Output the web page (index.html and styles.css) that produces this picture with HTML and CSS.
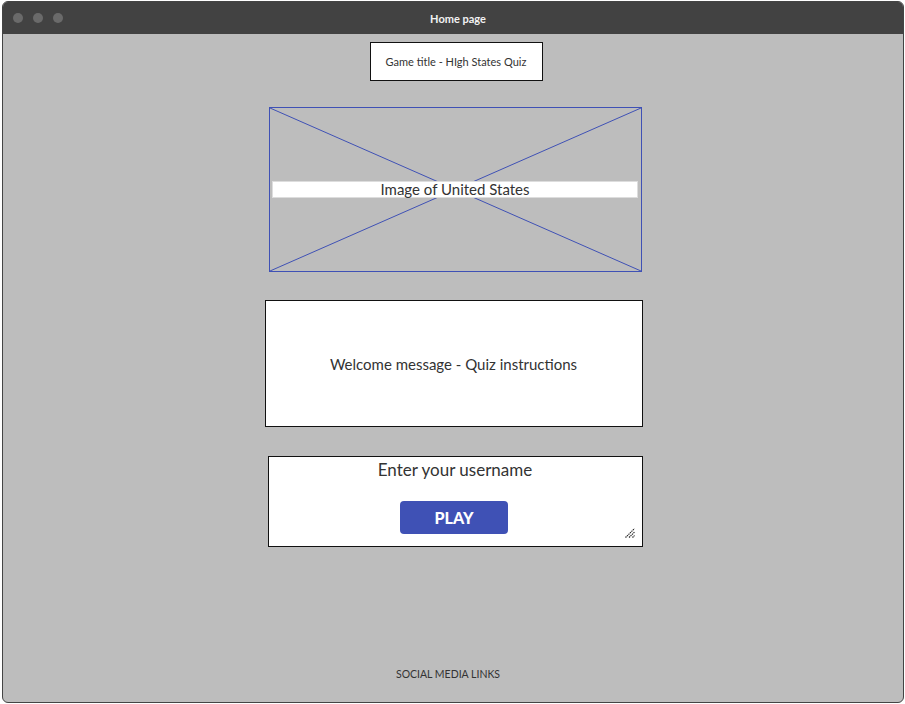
FILE: index.html
```html
<!DOCTYPE html>
<html>
<head>
<meta charset="utf-8">
<title>Home page</title>
<link rel="stylesheet" href="styles.css">
</head>
<body>
<div class="window">
  <div class="titlebar">
    <div class="dots"><span class="dot"></span><span class="dot"></span><span class="dot"></span></div>
    <div class="wtitle">Home page</div>
  </div>
  <div class="content">
    <div class="game-title">Game title - HIgh States Quiz</div>
    <div class="image-ph">
      <svg class="cross" viewBox="0 0 100 100" preserveAspectRatio="none">
        <line x1="0" y1="0" x2="100" y2="100" vector-effect="non-scaling-stroke"/>
        <line x1="100" y1="0" x2="0" y2="100" vector-effect="non-scaling-stroke"/>
      </svg>
      <div class="img-label">Image of United States</div>
    </div>
    <div class="welcome">Welcome message - Quiz instructions</div>
    <div class="username">
      <div class="user-label">Enter your username</div>
      <button class="play">PLAY</button>
      <svg class="grip" width="12" height="12" viewBox="0 0 12 12">
        <path d="M1.5 10.5 L10.5 1.5 M5 10.5 L10.5 5 M8.5 10.5 L10.5 8.5" stroke="#222" stroke-width="1.1" stroke-dasharray="1.4 0.7" fill="none"/>
      </svg>
    </div>
    <div class="spacer"></div>
    <div class="social">SOCIAL MEDIA LINKS</div>
  </div>
</div>
</body>
</html>
```

FILE: styles.css
```css
html, body {
  margin: 0;
  padding: 0;
  background: #ffffff;
}
body {
  font-family: "Lato", "Open Sans", sans-serif;
  color: #333;
}
.window {
  box-sizing: border-box;
  margin: 1px 0 0 2px;
  width: 902px;
  height: 702px;
  border: 1px solid #444;
  border-radius: 6px;
  background: #bdbdbd;
  overflow: hidden;
  display: flex;
  flex-direction: column;
}
.titlebar {
  height: 32px;
  background: #424242;
  display: flex;
  align-items: center;
  position: relative;
  flex: none;
}
.dots {
  display: flex;
  gap: 10px;
  padding-left: 10px;
}
.dot {
  width: 10px;
  height: 10px;
  border-radius: 50%;
  background: #6a6a6a;
}
.wtitle {
  position: absolute;
  left: 10px;
  right: 0;
  text-align: center;
  color: #f2f2f2;
  font-weight: 700;
  font-size: 11px;
}
.content {
  flex: 1;
  display: flex;
  flex-direction: column;
  align-items: center;
}
.game-title {
  box-sizing: border-box;
  margin-top: 8px;
  margin-left: 6px;
  width: 173px;
  height: 39px;
  border: 1px solid #111;
  background: #fff;
  display: flex;
  align-items: center;
  justify-content: center;
  font-size: 11px;
  color: #333;
}
.image-ph {
  box-sizing: border-box;
  position: relative;
  margin-top: 26px;
  margin-left: 4px;
  width: 373px;
  height: 165px;
  border: 1px solid #3f51b5;
  display: flex;
  align-items: center;
  justify-content: center;
}
.cross {
  position: absolute;
  inset: 0;
  width: 100%;
  height: 100%;
}
.cross line {
  stroke: #3f51b5;
  stroke-width: 1;
}
.img-label {
  position: relative;
  box-sizing: border-box;
  width: 366px;
  height: 17px;
  background: #fff;
  border: 1px solid #ddd;
  text-align: center;
  font-size: 15px;
  line-height: 15px;
  color: #333;
}
.welcome {
  box-sizing: border-box;
  margin-top: 28px;
  margin-left: 1px;
  width: 378px;
  height: 127px;
  border: 1px solid #111;
  background: #fff;
  display: flex;
  align-items: center;
  justify-content: center;
  font-size: 15px;
}
.username {
  box-sizing: border-box;
  position: relative;
  margin-top: 29px;
  margin-left: 4px;
  width: 375px;
  height: 91px;
  border: 1px solid #111;
  background: #fff;
  display: flex;
  flex-direction: column;
  align-items: center;
}
.user-label {
  margin-top: 2px;
  font-size: 17px;
  line-height: 22px;
}
.play {
  margin-top: 20px;
  margin-left: -2px;
  width: 108px;
  height: 33px;
  border: none;
  border-radius: 4px;
  background: #3f51b5;
  color: #fff;
  font-family: inherit;
  font-weight: 900;
  font-size: 16px;
  padding: 0;
}
.grip {
  position: absolute;
  right: 6px;
  bottom: 7px;
}
.spacer {
  flex: 1;
}
.social {
  margin-bottom: 22px;
  margin-left: -10px;
  font-size: 10.5px;
  color: #333;
}
```
